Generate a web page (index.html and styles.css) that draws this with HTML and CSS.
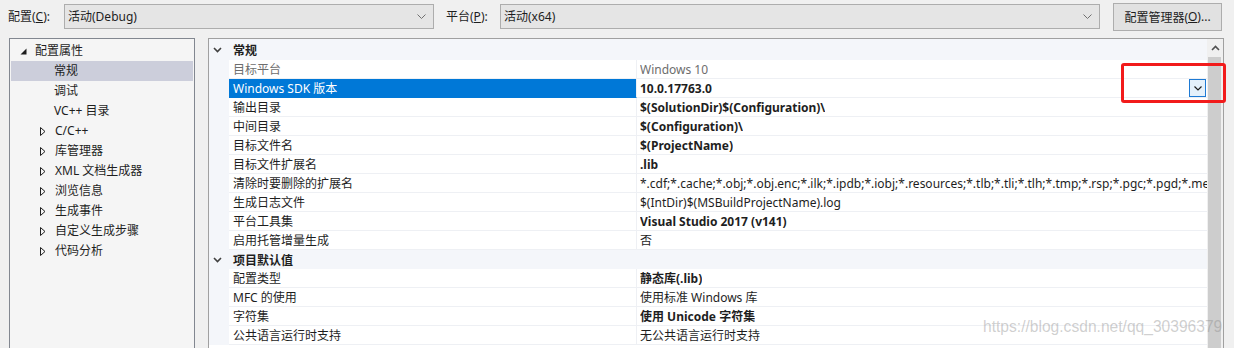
FILE: index.html
```html
<!DOCTYPE html>
<html lang="zh-CN">
<head>
<meta charset="utf-8">
<title>属性页</title>
<link rel="stylesheet" href="styles.css">
</head>
<body>
<div class="toolbar">
  <div class="lbl lbl-config">配置(<span class="mn">C</span>):</div>
  <div class="combo combo-config"><span>活动(Debug)</span><svg class="combo-chev" width="9" height="5" viewBox="0 0 9 5"><path d="M0.5 0.5 L4.5 4.5 L8.5 0.5" fill="none" stroke="#707070"/></svg></div>
  <div class="lbl lbl-platform">平台(<span class="mn">P</span>):</div>
  <div class="combo combo-platform"><span>活动(x64)</span><svg class="combo-chev" width="9" height="5" viewBox="0 0 9 5"><path d="M0.5 0.5 L4.5 4.5 L8.5 0.5" fill="none" stroke="#707070"/></svg></div>
  <div class="btn">配置管理器(<span class="mn">O</span>)...</div>
</div>

<div class="main">
  <div class="tree">
    <div class="tree-row root"><svg class="exp" width="7" height="7" viewBox="0 0 7 7"><path d="M6.5 0.5 V6.5 H0.5 Z" fill="#1e1e1e"/></svg><span>配置属性</span></div>
    <div class="tree-row leaf selected"><span>常规</span></div>
    <div class="tree-row leaf"><span>调试</span></div>
    <div class="tree-row leaf"><span>VC++ 目录</span></div>
    <div class="tree-row node"><svg class="exp" width="6" height="9" viewBox="0 0 6 9"><path d="M0.5 0.5 L5 4.5 L0.5 8.5 Z" fill="none" stroke="#1e1e1e"/></svg><span>C/C++</span></div>
    <div class="tree-row node"><svg class="exp" width="6" height="9" viewBox="0 0 6 9"><path d="M0.5 0.5 L5 4.5 L0.5 8.5 Z" fill="none" stroke="#1e1e1e"/></svg><span>库管理器</span></div>
    <div class="tree-row node"><svg class="exp" width="6" height="9" viewBox="0 0 6 9"><path d="M0.5 0.5 L5 4.5 L0.5 8.5 Z" fill="none" stroke="#1e1e1e"/></svg><span>XML 文档生成器</span></div>
    <div class="tree-row node"><svg class="exp" width="6" height="9" viewBox="0 0 6 9"><path d="M0.5 0.5 L5 4.5 L0.5 8.5 Z" fill="none" stroke="#1e1e1e"/></svg><span>浏览信息</span></div>
    <div class="tree-row node"><svg class="exp" width="6" height="9" viewBox="0 0 6 9"><path d="M0.5 0.5 L5 4.5 L0.5 8.5 Z" fill="none" stroke="#1e1e1e"/></svg><span>生成事件</span></div>
    <div class="tree-row node"><svg class="exp" width="6" height="9" viewBox="0 0 6 9"><path d="M0.5 0.5 L5 4.5 L0.5 8.5 Z" fill="none" stroke="#1e1e1e"/></svg><span>自定义生成步骤</span></div>
    <div class="tree-row node"><svg class="exp" width="6" height="9" viewBox="0 0 6 9"><path d="M0.5 0.5 L5 4.5 L0.5 8.5 Z" fill="none" stroke="#1e1e1e"/></svg><span>代码分析</span></div>
  </div>

  <div class="grid">
    <div class="grid-body">
      <div class="cat first"><span class="cat-chev"><svg width="9" height="6" viewBox="0 0 9 6"><path d="M1 1 L4.5 4.5 L8 1" fill="none" stroke="#404040" stroke-width="1.6"/></svg></span><span class="cat-name">常规</span></div>
      <div class="prop"><div class="gutter"></div><div class="name dim">目标平台</div><div class="value dim"><span class="vt">Windows 10</span></div></div>
      <div class="prop"><div class="gutter"></div><div class="name selected">Windows SDK 版本</div><div class="value bold"><span class="vt">10.0.17763.0</span><span class="dd"><svg width="8" height="5" viewBox="0 0 8 5"><path d="M0.5 0.5 L4 4 L7.5 0.5" fill="none" stroke="#1e1e1e" stroke-width="1.2"/></svg></span></div></div>
      <div class="prop"><div class="gutter"></div><div class="name">输出目录</div><div class="value bold"><span class="vt">$(SolutionDir)$(Configuration)\</span></div></div>
      <div class="prop"><div class="gutter"></div><div class="name">中间目录</div><div class="value bold"><span class="vt">$(Configuration)\</span></div></div>
      <div class="prop"><div class="gutter"></div><div class="name">目标文件名</div><div class="value bold"><span class="vt">$(ProjectName)</span></div></div>
      <div class="prop"><div class="gutter"></div><div class="name">目标文件扩展名</div><div class="value bold"><span class="vt">.lib</span></div></div>
      <div class="prop"><div class="gutter"></div><div class="name">清除时要删除的扩展名</div><div class="value"><span class="vt">*.cdf;*.cache;*.obj;*.obj.enc;*.ilk;*.ipdb;*.iobj;*.resources;*.tlb;*.tli;*.tlh;*.tmp;*.rsp;*.pgc;*.pgd;*.meta;*.tlog;*.manifest;*.res;*.pch;*.exp;*.idb;*.rep;*.xdc;*.pdb;*_manifest.rc;*.bsc;*.sbr;*.xml;*.metagen;*.bi</span></div></div>
      <div class="prop"><div class="gutter"></div><div class="name">生成日志文件</div><div class="value"><span class="vt">$(IntDir)$(MSBuildProjectName).log</span></div></div>
      <div class="prop"><div class="gutter"></div><div class="name">平台工具集</div><div class="value bold"><span class="vt">Visual Studio 2017 (v141)</span></div></div>
      <div class="prop"><div class="gutter"></div><div class="name">启用托管增量生成</div><div class="value"><span class="vt">否</span></div></div>
      <div class="cat"><span class="cat-chev"><svg width="9" height="6" viewBox="0 0 9 6"><path d="M1 1 L4.5 4.5 L8 1" fill="none" stroke="#404040" stroke-width="1.6"/></svg></span><span class="cat-name">项目默认值</span></div>
      <div class="prop"><div class="gutter"></div><div class="name">配置类型</div><div class="value bold"><span class="vt">静态库(.lib)</span></div></div>
      <div class="prop"><div class="gutter"></div><div class="name">MFC 的使用</div><div class="value"><span class="vt">使用标准 Windows 库</span></div></div>
      <div class="prop"><div class="gutter"></div><div class="name">字符集</div><div class="value bold"><span class="vt">使用 Unicode 字符集</span></div></div>
      <div class="prop"><div class="gutter"></div><div class="name">公共语言运行时支持</div><div class="value"><span class="vt">无公共语言运行时支持</span></div></div>
    </div>
    <div class="scrollbar">
      <div class="sb-arrow"><svg width="9" height="6" viewBox="0 0 9 6"><path d="M1 5 L4.5 1.5 L8 5" fill="none" stroke="#505050" stroke-width="1.6"/></svg></div>
      <div class="sb-thumb"></div>
    </div>
  </div>
</div>

<div class="annot"></div>
<div class="watermark">https://blog.csdn.net/qq_30396379</div>
</body>
</html>
```

FILE: styles.css
```css
html, body {
  margin: 0;
  padding: 0;
}
body {
  width: 1234px;
  height: 348px;
  overflow: hidden;
  position: relative;
  background: #f0f0f0;
  font-family: "Noto Sans", "Noto Sans CJK SC", sans-serif;
  font-size: 12px;
  color: #1e1e1e;
}

/* ---------- toolbar ---------- */
.toolbar {
  display: flex;
  align-items: center;
  height: 33px;
  padding: 0 12px 0 8px;
  box-sizing: border-box;
}
.lbl {
  line-height: 18px;
  white-space: nowrap;
}
.lbl-config { width: 56px; }
.lbl-platform { width: 54px; margin-left: 12px; }
.mn { text-decoration: underline; }
.combo {
  display: flex;
  align-items: center;
  justify-content: space-between;
  height: 25px;
  box-sizing: border-box;
  border: 1px solid #adadad;
  background: #e5e5e5;
  padding: 0 7px 0 3px;
  line-height: 18px;
  white-space: nowrap;
}
.combo-config { width: 370px; }
.combo-platform { width: 600px; }
.btn {
  margin-left: 13px;
  width: 109px;
  height: 28px;
  box-sizing: border-box;
  border: 1px solid #adadad;
  background: #e1e1e1;
  display: flex;
  align-items: center;
  justify-content: center;
  white-space: nowrap;
}

/* ---------- main ---------- */
.main {
  display: flex;
  gap: 13px;
  padding-left: 9px;
  margin-top: 5px;
}

/* tree */
.tree {
  width: 186px;
  height: 320px;
  box-sizing: border-box;
  border: 1px solid #828790;
  background: #f5f5f5;
  padding: 2px 1px;
}
.tree-row {
  display: flex;
  align-items: center;
  height: 20px;
  line-height: 20px;
  white-space: nowrap;
}
.tree-row .exp { flex: none; margin-right: 8px; }
.tree-row.root { padding-left: 9px; }
.tree-row.node { padding-left: 29px; }
.tree-row.node .exp { margin-right: 9px; }
.tree-row.leaf { padding-left: 43px; }
.tree-row.selected { background: #cccedb; }

/* property grid */
.grid {
  width: 1016px;
  height: 320px;
  box-sizing: border-box;
  border: 1px solid #a0a0a0;
  background: #ffffff;
  display: flex;
}
.grid-body {
  flex: 1;
  min-width: 0;
  overflow: hidden;
}
.cat {
  display: flex;
  align-items: center;
  height: 19px;
  background: #f4f6fa;
  font-weight: bold;
  line-height: 17px;
}
.cat.first { height: 21px; }
.cat-chev {
  width: 20px;
  padding-left: 4px;
  box-sizing: border-box;
  display: flex;
  align-items: center;
}
.cat-name { padding-left: 4px; padding-top: 1px; }

.prop {
  display: flex;
  height: 19px;
}
.gutter {
  width: 20px;
  flex: none;
  background: #f4f6fa;
}
.name {
  width: 408px;
  flex: none;
  box-sizing: border-box;
  padding: 1px 0 0 4px;
  border-right: 1px solid #eef0f4;
  border-bottom: 1px solid #eef0f4;
  line-height: 17px;
  white-space: nowrap;
}
.name.selected {
  background: #0078d7;
  color: #ffffff;
  border-bottom-color: #0078d7;
}
.value {
  flex: 1;
  min-width: 0;
  display: flex;
  align-items: center;
  padding-left: 3px;
  border-bottom: 1px solid #eef0f4;
  line-height: 17px;
  white-space: nowrap;
  overflow: hidden;
}
.vt {
  overflow: hidden;
  white-space: nowrap;
  padding-top: 1px;
}
.dim { color: #6d6d6d; }
.bold { font-weight: bold; }
.dd {
  flex: none;
  margin-left: auto;
  margin-right: 1px;
  width: 17px;
  height: 18px;
  box-sizing: border-box;
  border: 1px solid #1e7ad4;
  background: #e5f1fb;
  display: flex;
  align-items: center;
  justify-content: center;
}

/* scrollbar */
.scrollbar {
  width: 16px;
  flex: none;
  background: #f0f0f0;
  display: flex;
  flex-direction: column;
}
.sb-arrow {
  height: 18px;
  display: flex;
  align-items: center;
  justify-content: center;
}
.sb-thumb {
  flex: 1;
  margin: 0 2px 0 1px;
  background: #cdcdcd;
}

/* overlays */
.annot {
  position: absolute;
  left: 1121px;
  top: 63px;
  width: 105px;
  height: 40px;
  box-sizing: border-box;
  border: 3px solid #f21b1b;
  border-radius: 3px;
}
.watermark {
  position: absolute;
  left: 983px;
  top: 318px;
  font-family: "Liberation Sans", Arial, sans-serif;
  font-size: 15.6px;
  line-height: 18px;
  color: rgba(140, 140, 140, 0.42);
  white-space: nowrap;
}
```
